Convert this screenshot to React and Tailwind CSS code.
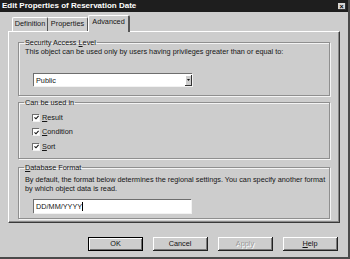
import React from 'react';

const face = 'bg-[#cdcdcd]';

const Check = () => (
  <span className="w-[7px] h-[7px] bg-white border-t border-l border-[#6e6e6e] shadow-[1px_1px_0_#f2f2f2] flex items-center justify-center">
    <svg width="5" height="5" viewBox="0 0 5 5">
      <path d="M0.5 2.3 L2 3.8 L4.6 0.8" stroke="#111" strokeWidth="1.1" fill="none" />
    </svg>
  </span>
);

const Group = ({ label, children, className = '' }) => (
  <fieldset className={`border border-[#8f8f8f] shadow-[inset_1px_1px_0_#f4f4f4,1px_1px_0_#f4f4f4] pl-[6px] ${className}`}>
    <legend className="-ml-[1px] px-[1px] leading-[9px]">{label}</legend>
    {children}
  </fieldset>
);

const Button = ({ children, primary, disabled }) => (
  <button
    className={`w-[55px] h-[14px] leading-[12px] text-center ${face} ${
      primary ? 'border border-black shadow-[inset_1px_1px_0_#fff,inset_-1px_-1px_0_#6e6e6e]' : 'border-r border-b border-[#222] shadow-[inset_1px_1px_0_#fff,inset_-1px_-1px_0_#7a7a7a]'
    } ${disabled ? 'text-[#9a9a9a] [text-shadow:1px_1px_0_#fff]' : 'text-[#111]'}`}
  >
    {children}
  </button>
);

export default function App() {
  return (
    <div
      className={`w-[350px] h-[259px] ${face} text-[7.3px] text-[#161616] border-r-2 border-b-2 border-[#4a4a4a] overflow-hidden`}
      style={{ fontFamily: '"Liberation Sans", Arial, sans-serif' }}
    >
      {/* Title bar */}
      <div className="h-[12px] bg-[#1e1e1e] flex items-center justify-between pl-[2px] pr-[2px]">
        <span className="text-white font-bold text-[8px] leading-[12px]">Edit Properties of Reservation Date</span>
        <span className="w-[8px] h-[7px] bg-[#d6d6d6] border-r border-b border-[#333] flex items-center justify-center text-[7px] leading-none font-bold text-black mt-[1px]">
          ×
        </span>
      </div>

      {/* Tabs */}
      <div className="flex items-end h-[19px] pl-[12px]">
        <div className="h-[14px] w-[36px] border-l border-t border-white border-r border-r-[#555] rounded-t-[2px] leading-[12px] text-center">Definition</div>
        <div className="h-[14px] w-[40px] border-t border-white border-r border-r-[#555] rounded-tr-[2px] leading-[12px] text-center">Properties</div>
        <div className={`h-[17px] w-[42px] -mb-px relative z-10 ${face} border-l border-t border-white border-r-2 border-r-[#555] rounded-t-[2px] leading-[12px] text-center`}>Advanced</div>
      </div>

      {/* Panel */}
      <div className="ml-[8px] w-[332px] h-[192px] border-l border-t border-white border-r border-b border-r-[#3a3a3a] border-b-[#3a3a3a] shadow-[inset_-1px_-1px_0_#8a8a8a] pt-[6px] px-[9px] flex flex-col">
        <Group label={<>Security Access <u>L</u>evel</>} className="pr-[6px] pb-[9px]">
          <div className="leading-[9px]">This object can be used only by users having privileges greater than or equal to:</div>
          <div className="mt-[17px] ml-[8px] w-[159px] h-[13px] bg-white border-t border-l border-[#6e6e6e] shadow-[1px_1px_0_#f2f2f2] flex items-center justify-between">
            <span className="pl-[2px] leading-[11px]">Public</span>
            <span className={`w-[7px] h-[11px] ${face} border-r border-b border-[#333] shadow-[inset_1px_1px_0_#fff] flex items-center justify-center`}>
              <svg width="3" height="2" viewBox="0 0 3 2"><path d="M0 0 H3 L1.5 2 Z" fill="#111" /></svg>
            </span>
          </div>
        </Group>

        <Group label="Can be used in" className="pr-[6px] mt-[2px] pb-[4px]">
          <div className="mt-[3px] ml-[7px] flex flex-col">
            {[['R', 'esult'], ['C', 'ondition'], ['S', 'ort']].map(([k, r]) => (
              <div key={k} className="h-[14.5px] flex items-center gap-[3px]">
                <Check />
                <span className="leading-[9px]"><u>{k}</u>{r}</span>
              </div>
            ))}
          </div>
        </Group>

        <Group label={<><u>D</u>atabase Format</>} className="pr-[1px] mt-[4px] pb-[5px]">
          <div className="mt-[3px] leading-[9px]">
            By default, the format below determines the regional settings. You can specify another format by which object data is read.
          </div>
          <div className="mt-[6px] ml-[8px] w-[158px] h-[14px] bg-white border-t border-l border-[#6e6e6e] shadow-[1px_1px_0_#f2f2f2] flex items-center pl-[2px]">
            <span className="leading-[11px]">DD/MM/YYYY</span>
            <span className="w-px h-[9px] bg-black" />
          </div>
        </Group>
      </div>

      {/* Buttons */}
      <div className="mt-[14px] pl-[88px] flex gap-[10px]">
        <Button primary>OK</Button>
        <Button>Cancel</Button>
        <Button disabled>Apply</Button>
        <Button><u>H</u>elp</Button>
      </div>
    </div>
  );
}
